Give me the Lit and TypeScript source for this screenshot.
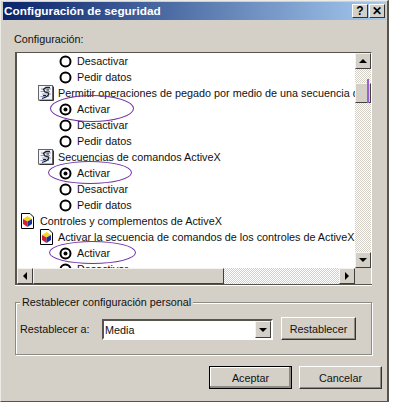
import { LitElement, html, css, svg } from "lit";
import { customElement } from "lit/decorators.js";

type Row = { kind: "radio" | "script" | "ax" | "ax2"; text: string; on?: boolean };

const rows: Row[] = [
  { kind: "radio", text: "Desactivar" },
  { kind: "radio", text: "Pedir datos" },
  { kind: "script", text: "Permitir operaciones de pegado por medio de una secuencia de comandos" },
  { kind: "radio", text: "Activar", on: true },
  { kind: "radio", text: "Desactivar" },
  { kind: "radio", text: "Pedir datos" },
  { kind: "script", text: "Secuencias de comandos ActiveX" },
  { kind: "radio", text: "Activar", on: true },
  { kind: "radio", text: "Desactivar" },
  { kind: "radio", text: "Pedir datos" },
  { kind: "ax", text: "Controles y complementos de ActiveX" },
  { kind: "ax2", text: "Activar la secuencia de comandos de los controles de ActiveX" },
  { kind: "radio", text: "Activar", on: true },
  { kind: "radio", text: "Desactivar" },
];

const radio = (on?: boolean) => html`<svg class="ic radio" width="13" height="13" viewBox="0 0 13 13">
  <circle cx="6.5" cy="6.5" r="5" fill="#fff" stroke="#000" stroke-width="2"></circle>
  ${on ? svg`<circle cx="6.5" cy="6.5" r="2" fill="#000"></circle>` : ""}
</svg>`;

const script = html`<svg class="ic" width="16" height="16" viewBox="0 0 16 16">
  <rect x="0.5" y="0.5" width="14" height="14.5" fill="#f4f6fb" stroke="#666"></rect>
  <path d="M15.5 1.5V15.5H1.5" fill="none" stroke="#333"></path>
  <path d="M3 4H13M2.5 6.5H12M4 9H13M2.5 11.5H11" stroke="#8da0d4" stroke-width="1"></path>
  <path d="M12 2.5H8L5.5 4.5 7 7 10.5 8 10.5 10 8 12 4 13.5" fill="none" stroke="#222" stroke-width="1.3"></path>
  <path d="M11 5H8.5M8 10.5H5" stroke="#222" stroke-width="1"></path>
</svg>`;

const ax = html`<svg class="ic" width="13" height="16" viewBox="0 0 13 16">
  <path d="M0.5 0.5H9L12.5 4V15.5H0.5Z" fill="#fff" stroke="#000"></path>
  <path d="M6.5 3L11 6 6.5 8.5 2 6Z" fill="#f2d81e"></path>
  <path d="M2 6L6.5 8.5V14L2 11Z" fill="#d4202c"></path>
  <path d="M11 6L6.5 8.5V14L11 11Z" fill="#1c2f9c"></path>
</svg>`;

@customElement("app-root")
export class AppRoot extends LitElement {
  static styles = css`
    :host {
      display: block;
      width: 400px;
      height: 402px;
      background: #fff;
      overflow: hidden;
      font: 10.8px "Liberation Sans", Arial, sans-serif;
      color: #111;
    }
    * { box-sizing: border-box; }
    .win {
      width: 389px;
      height: 402px;
      background: #d4d0c8;
      border-style: solid;
      border-width: 1px 2px 1px 1px;
      border-color: #ecebe6 #55544f #55544f #ecebe6;
      padding: 1px 1px 0 2px;
      display: flex;
      flex-direction: column;
    }
    .title {
      height: 18px;
      flex: none;
      background: linear-gradient(90deg, #0a246a, #a6caf0);
      color: #fff;
      font: bold 11.8px "Liberation Sans", Arial, sans-serif;
      display: flex;
      align-items: center;
      padding: 0 1px 0 1px;
      gap: 1px;
    }
    .title span { flex: 1; white-space: nowrap; }
    .cap {
      width: 16px;
      height: 14px;
      background: #d4d0c8;
      border: 1px solid;
      border-color: #fff #333 #333 #fff;
      display: flex;
      align-items: center;
      justify-content: center;
      color: #000;
      font: bold 12px "Liberation Sans", Arial, sans-serif;
    }
    .body {
      flex: 1;
      display: flex;
      flex-direction: column;
      padding: 0 3px 0 12px;
    }
    .lbl { height: 32px; padding-top: 12px; line-height: 14px; margin-left: -1px; }
    .list {
      width: 357px;
      height: 232px;
      border-style: solid;
      border-width: 1px 1px 0 2px;
      border-color: #55544f #fff #fff #55544f;
      box-shadow: 0 1px 0 #55544f, 0 2px 0 #fff;
      background: #fff;
      display: grid;
      grid-template-columns: 1fr 16px;
      grid-template-rows: 1fr 16px;
      position: relative;
    }
    .rows { overflow: hidden; }
    .row {
      height: 16px;
      display: flex;
      align-items: center;
      white-space: nowrap;
      overflow: hidden;
    }
    .row.radio { padding-left: 42px; gap: 5px; }
    .row.script { padding-left: 21px; gap: 4px; }
    .row.ax { padding-left: 4px; gap: 6px; }
    .row.ax2 { padding-left: 23px; gap: 5px; }
    .ic { flex: none; }
    .track {
      background-color: #d4d0c8;
      background-image: conic-gradient(#fff 25%, #d4d0c8 0 50%, #fff 0 75%, #d4d0c8 0);
      background-size: 2px 2px;
      display: flex;
    }
    .track.v { flex-direction: column; }
    .sb {
      flex: none;
      background: #d4d0c8;
      border: 1px solid;
      border-color: #f4f3ef #404040 #404040 #f4f3ef;
      display: flex;
      align-items: center;
      justify-content: center;
    }
    .v .sb { height: 16px; }
    .h .sb { width: 16px; }
    .gap { flex: none; }
    .spacer { flex: 1; }
    .v .vthumb { height: 20px; }
    .h .hthumb { width: 191px; }
    .corner { background: #d4d0c8; }
    .ellipse {
      position: absolute;
      border: 1.2px solid #7030a8;
      border-radius: 50%;
    }
    .mark {
      position: absolute;
      left: 350px;
      top: 26px;
      width: 1.5px;
      height: 24px;
      background: #9a5fd0;
    }
    .group {
      margin-top: 18px;
      width: 357px;
      height: 53px;
      border: 1px solid #8c8a84;
      box-shadow: 1px 1px 0 #fff, inset 1px 1px 0 #fff;
      position: relative;
      display: flex;
      align-items: flex-start;
      padding: 14px 0 0 4px;
    }
    .legend {
      position: absolute;
      left: 4px;
      top: -8px;
      padding: 0 2px;
      background: #d4d0c8;
      line-height: 14px;
    }
    .glabel { width: 82px; line-height: 18px; padding-top: 3px; }
    .combo {
      width: 171px;
      height: 21px;
      margin-top: 2px;
      background: #fff;
      border: 2px solid;
      border-color: #55544f #fff #fff #55544f;
      display: flex;
      align-items: center;
      padding-left: 1px;
    }
    .combo span { flex: 1; }
    .combo .sb { width: 16px; height: 17px; }
    .btn {
      background: #d4d0c8;
      border: 1px solid;
      border-color: #fff #333 #333 #fff;
      box-shadow: inset -1px -1px 0 #8c8a84;
      display: flex;
      align-items: center;
      justify-content: center;
    }
    .reset { width: 75px; height: 23px; margin-left: 8px; }
    .actions {
      margin-top: 11px;
      display: flex;
      justify-content: flex-end;
      gap: 7px;
      margin-right: 1px;
    }
    .actions .btn { width: 83px; height: 23px; }
    .actions .default { outline: 1px solid #000; outline-offset: -1px; box-shadow: inset -2px -2px 0 #8c8a84, inset 1px 1px 0 #fff; }
    .u { width: 0; height: 0; border: 4px solid transparent; border-top: 0; border-bottom-color: #000; }
    .d { width: 0; height: 0; border: 4px solid transparent; border-bottom: 0; border-top-color: #000; }
    .l { width: 0; height: 0; border: 4px solid transparent; border-left: 0; border-right-color: #000; }
    .r { width: 0; height: 0; border: 4px solid transparent; border-right: 0; border-left-color: #000; }
  `;

  render() {
    return html`<div class="win">
      <div class="title">
        <span>Configuración de seguridad</span>
        <div class="cap">?</div>
        <div class="cap">✕</div>
      </div>
      <div class="body">
        <div class="lbl">Configuración:</div>
        <div class="list">
          <div class="rows">
            ${rows.map((r) => html`<div class="row ${r.kind}">
              ${r.kind === "radio" ? radio(r.on) : r.kind === "script" ? script : ax}
              <span>${r.text}</span>
            </div>`)}
          </div>
          <div class="track v">
            <div class="sb"><i class="u"></i></div>
            <div class="gap" style="height:14px"></div>
            <div class="sb vthumb"></div>
            <div class="spacer"></div>
            <div class="sb"><i class="d"></i></div>
          </div>
          <div class="track h">
            <div class="sb"><i class="l"></i></div>
            <div class="sb hthumb"></div>
            <div class="spacer"></div>
            <div class="sb"><i class="r"></i></div>
          </div>
          <div class="corner"></div>
          <div class="ellipse" style="left:33px;top:42px;width:84px;height:27px"></div>
          <div class="ellipse" style="left:31px;top:108px;width:84px;height:23px"></div>
          <div class="ellipse" style="left:32px;top:188px;width:87px;height:23px"></div>
          <div class="mark"></div>
        </div>
        <div class="group">
          <div class="legend">Restablecer configuración personal</div>
          <div class="glabel">Restablecer a:</div>
          <div class="combo">
            <span>Media</span>
            <div class="sb"><i class="d"></i></div>
          </div>
          <div class="btn reset">Restablecer</div>
        </div>
        <div class="actions">
          <div class="btn default">Aceptar</div>
          <div class="btn">Cancelar</div>
        </div>
      </div>
    </div>`;
  }
}
